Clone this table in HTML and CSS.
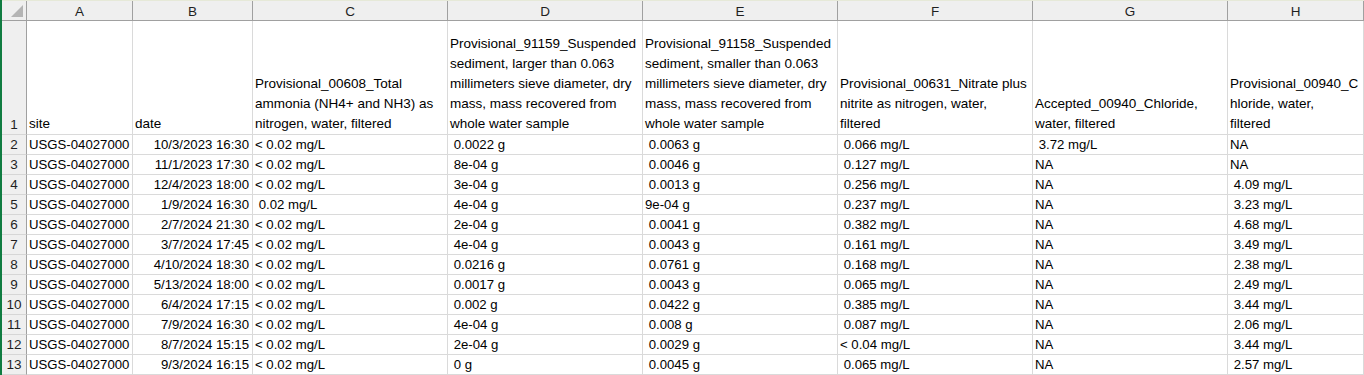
FILE: index.html
```html
<!DOCTYPE html>
<html>
<head>
<meta charset="utf-8">
<link rel="stylesheet" href="styles.css">
</head>
<body>
<div class="app">
  <div class="topline"></div>
  <div class="sheet">
    <div class="corner"><svg width="24" height="19" viewBox="0 0 24 19"><polygon points="9,16 21,4 21,16" fill="#b4b4b4"/></svg></div>
    <div class="colhead">A</div>
    <div class="colhead">B</div>
    <div class="colhead">C</div>
    <div class="colhead">D</div>
    <div class="colhead">E</div>
    <div class="colhead">F</div>
    <div class="colhead">G</div>
    <div class="colhead">H</div>

    <div class="rowhead">1</div>
    <div class="cell head">site</div>
    <div class="cell head">date</div>
    <div class="cell head">Provisional_00608_Total<br>ammonia (NH4+ and NH3) as<br>nitrogen, water, filtered</div>
    <div class="cell head">Provisional_91159_Suspended<br>sediment, larger than 0.063<br>millimeters sieve diameter, dry<br>mass, mass recovered from<br>whole water sample</div>
    <div class="cell head">Provisional_91158_Suspended<br>sediment, smaller than 0.063<br>millimeters sieve diameter, dry<br>mass, mass recovered from<br>whole water sample</div>
    <div class="cell head">Provisional_00631_Nitrate plus<br>nitrite as nitrogen, water,<br>filtered</div>
    <div class="cell head">Accepted_00940_Chloride,<br>water, filtered</div>
    <div class="cell head">Provisional_00940_C<br>hloride, water,<br>filtered</div>

    <div class="rowhead">2</div><div class="cell">USGS-04027000</div><div class="cell num">10/3/2023 16:30</div><div class="cell">&lt; 0.02 mg/L</div><div class="cell"> 0.0022 g</div><div class="cell"> 0.0063 g</div><div class="cell"> 0.066 mg/L</div><div class="cell"> 3.72 mg/L</div><div class="cell">NA</div>
    <div class="rowhead">3</div><div class="cell">USGS-04027000</div><div class="cell num">11/1/2023 17:30</div><div class="cell">&lt; 0.02 mg/L</div><div class="cell"> 8e-04 g</div><div class="cell"> 0.0046 g</div><div class="cell"> 0.127 mg/L</div><div class="cell">NA</div><div class="cell">NA</div>
    <div class="rowhead">4</div><div class="cell">USGS-04027000</div><div class="cell num">12/4/2023 18:00</div><div class="cell">&lt; 0.02 mg/L</div><div class="cell"> 3e-04 g</div><div class="cell"> 0.0013 g</div><div class="cell"> 0.256 mg/L</div><div class="cell">NA</div><div class="cell"> 4.09 mg/L</div>
    <div class="rowhead">5</div><div class="cell">USGS-04027000</div><div class="cell num">1/9/2024 16:30</div><div class="cell"> 0.02 mg/L</div><div class="cell"> 4e-04 g</div><div class="cell">9e-04 g</div><div class="cell"> 0.237 mg/L</div><div class="cell">NA</div><div class="cell"> 3.23 mg/L</div>
    <div class="rowhead">6</div><div class="cell">USGS-04027000</div><div class="cell num">2/7/2024 21:30</div><div class="cell">&lt; 0.02 mg/L</div><div class="cell"> 2e-04 g</div><div class="cell"> 0.0041 g</div><div class="cell"> 0.382 mg/L</div><div class="cell">NA</div><div class="cell"> 4.68 mg/L</div>
    <div class="rowhead">7</div><div class="cell">USGS-04027000</div><div class="cell num">3/7/2024 17:45</div><div class="cell">&lt; 0.02 mg/L</div><div class="cell"> 4e-04 g</div><div class="cell"> 0.0043 g</div><div class="cell"> 0.161 mg/L</div><div class="cell">NA</div><div class="cell"> 3.49 mg/L</div>
    <div class="rowhead">8</div><div class="cell">USGS-04027000</div><div class="cell num">4/10/2024 18:30</div><div class="cell">&lt; 0.02 mg/L</div><div class="cell"> 0.0216 g</div><div class="cell"> 0.0761 g</div><div class="cell"> 0.168 mg/L</div><div class="cell">NA</div><div class="cell"> 2.38 mg/L</div>
    <div class="rowhead">9</div><div class="cell">USGS-04027000</div><div class="cell num">5/13/2024 18:00</div><div class="cell">&lt; 0.02 mg/L</div><div class="cell"> 0.0017 g</div><div class="cell"> 0.0043 g</div><div class="cell"> 0.065 mg/L</div><div class="cell">NA</div><div class="cell"> 2.49 mg/L</div>
    <div class="rowhead">10</div><div class="cell">USGS-04027000</div><div class="cell num">6/4/2024 17:15</div><div class="cell">&lt; 0.02 mg/L</div><div class="cell"> 0.002 g</div><div class="cell"> 0.0422 g</div><div class="cell"> 0.385 mg/L</div><div class="cell">NA</div><div class="cell"> 3.44 mg/L</div>
    <div class="rowhead">11</div><div class="cell">USGS-04027000</div><div class="cell num">7/9/2024 16:30</div><div class="cell">&lt; 0.02 mg/L</div><div class="cell"> 4e-04 g</div><div class="cell"> 0.008 g</div><div class="cell"> 0.087 mg/L</div><div class="cell">NA</div><div class="cell"> 2.06 mg/L</div>
    <div class="rowhead">12</div><div class="cell">USGS-04027000</div><div class="cell num">8/7/2024 15:15</div><div class="cell">&lt; 0.02 mg/L</div><div class="cell"> 2e-04 g</div><div class="cell"> 0.0029 g</div><div class="cell">&lt; 0.04 mg/L</div><div class="cell">NA</div><div class="cell"> 3.44 mg/L</div>
    <div class="rowhead">13</div><div class="cell">USGS-04027000</div><div class="cell num">9/3/2024 16:15</div><div class="cell">&lt; 0.02 mg/L</div><div class="cell"> 0 g</div><div class="cell"> 0.0045 g</div><div class="cell"> 0.065 mg/L</div><div class="cell">NA</div><div class="cell"> 2.57 mg/L</div>
  </div>
</div>
</body>
</html>
```

FILE: styles.css
```css
html, body {
  margin: 0;
  padding: 0;
  background: #ffffff;
}

.app {
  border-left: 2px solid #107c41;
  height: 375px;
  overflow: hidden;
  font-family: "Liberation Sans", Arial, sans-serif;
  color: #000;
}

.topline {
  height: 1px;
  background: #e6e9d8;
}

.sheet {
  display: grid;
  grid-template-columns: 25px 106px 120px 195px 195px 195px 195px 195px 136px;
  grid-template-rows: 20px 114px repeat(12, 20px);
}

.corner,
.colhead,
.rowhead {
  background: #efefef;
  box-sizing: border-box;
  color: #1f1f1f;
  font-size: 13.5px;
}

.corner {
  border-right: 1px solid #a0a0a0;
  border-bottom: 1px solid #a0a0a0;
  display: flex;
}

.colhead {
  border-right: 1px solid #a0a0a0;
  border-bottom: 1px solid #a0a0a0;
  display: flex;
  align-items: center;
  justify-content: center;
  padding-top: 1px;
}

.rowhead {
  border-right: 1px solid #a0a0a0;
  border-bottom: 1px solid #d6d6d6;
  display: flex;
  align-items: flex-end;
  justify-content: center;
  line-height: 19px;
}

.cell {
  box-sizing: border-box;
  border-right: 1px solid #dadada;
  border-bottom: 1px solid #dadada;
  display: flex;
  flex-direction: column;
  justify-content: flex-end;
  padding: 0 2px;
  font-size: 13.2px;
  line-height: 19px;
  white-space: pre;
  overflow: hidden;
}

.cell.head {
  font-size: 13.5px;
  line-height: 20px;
  white-space: nowrap;
}

.num {
  align-items: flex-end;
  padding-right: 3px;
}
```
